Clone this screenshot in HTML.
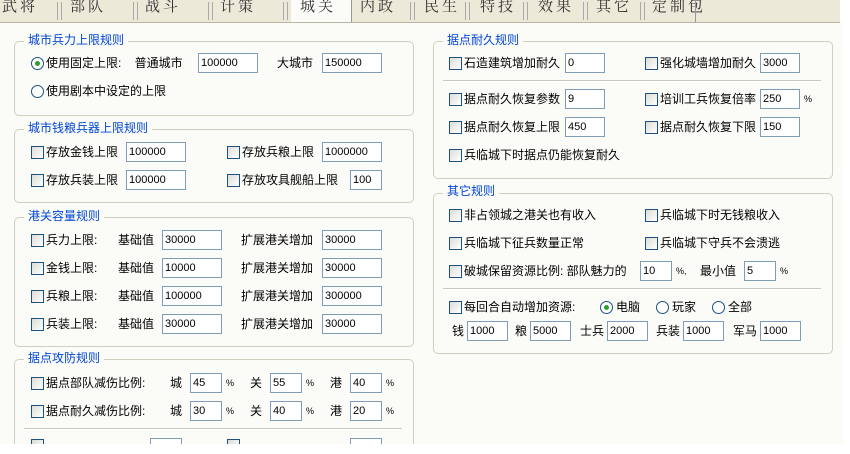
<!DOCTYPE html><html><head><meta charset="utf-8"><style>
html,body{margin:0;width:850px;height:454px;overflow:hidden}
body{background:#fff;position:relative;font-family:"Liberation Sans","Noto Sans CJK SC","WenQuanYi Zen Hei",sans-serif;font-size:12px;color:#000}
.bg{position:absolute;left:0;top:22px;width:843px;height:432px;background:#fbfbf8}
.tabs{position:absolute;left:0;top:0;width:840px;height:22px;background:#ece9d8;border-bottom:1px solid #b8b4a0;overflow:hidden}
.tab{position:absolute;top:-5px;font-size:15px;letter-spacing:3px;color:#333;font-family:"Noto Serif CJK SC",serif}
.sep{position:absolute;top:2px;width:3px;height:18px;border-left:1px solid #aaa;border-right:1px solid #aaa}
.g{position:absolute;border:1px solid #d0d0bf;border-radius:5px}
.gt{position:absolute;color:#0046d5;background:#fbfbf8;padding:0 4px;line-height:14px}
.t{position:absolute;line-height:14px;white-space:nowrap}
.cb{position:absolute;width:11px;height:11px;border:1px solid #1c5180;background:linear-gradient(135deg,#dcdcd6,#fff)}
.rb{position:absolute;width:11px;height:11px;border:1px solid #1c5180;border-radius:50%;background:#fff}
.rb.on:after{content:"";position:absolute;left:3px;top:3px;width:5px;height:5px;border-radius:50%;background:#2aa02a}
.in{position:absolute;border:1px solid #7f9db9;background:#fff;font-size:11px;line-height:18px;padding-left:2px;box-sizing:border-box;height:20px}
.hr{position:absolute;height:1px;background:#c8c8bc;border-bottom:1px solid #fff}
</style></head><body>
<div class="bg"></div>
<div class="tabs">
<span class="tab" style="left:2px">武将</span><div class="sep" style="left:57px"></div>
<span class="tab" style="left:70px">部队</span><div class="sep" style="left:133px"></div>
<span class="tab" style="left:145px">战斗</span><div class="sep" style="left:208px"></div>
<span class="tab" style="left:220px">计策</span><div class="sep" style="left:283px"></div>
<div style="position:absolute;left:291px;top:0;width:60px;height:23px;background:#fbfbf8;border-right:1px solid #999"></div>
<span class="tab" style="left:300px">城关</span>
<span class="tab" style="left:360px">内政</span><div class="sep" style="left:410px"></div>
<span class="tab" style="left:424px">民生</span><div class="sep" style="left:465px"></div>
<span class="tab" style="left:480px">特技</span><div class="sep" style="left:523px"></div>
<span class="tab" style="left:538px">效果</span><div class="sep" style="left:583px"></div>
<span class="tab" style="left:596px">其它</span><div class="sep" style="left:640px"></div>
<span class="tab" style="left:652px">定制包</span><div style="position:absolute;left:695px;top:0;width:1px;height:22px;background:#999"></div>
</div>

<div class="g" style="left:14px;top:41px;width:398px;height:73px"></div><div class="gt" style="left:24px;top:33px">城市兵力上限规则</div>
<div class="rb on" style="left:31px;top:57px"></div><div class="t" style="left:46px;top:56px">使用固定上限:&nbsp;&nbsp;&nbsp;&nbsp;普通城市</div>
<div class="in" style="left:198px;top:53px;width:60px">100000</div>
<div class="t" style="left:277px;top:56px">大城市</div><div class="in" style="left:322px;top:53px;width:60px">150000</div>
<div class="rb" style="left:31px;top:85px"></div><div class="t" style="left:46px;top:84px">使用剧本中设定的上限</div>

<div class="g" style="left:14px;top:129px;width:398px;height:72px"></div><div class="gt" style="left:24px;top:121px">城市钱粮兵器上限规则</div>
<div class="cb" style="left:31px;top:146px"></div><div class="t" style="left:46px;top:145px">存放金钱上限</div><div class="in" style="left:126px;top:142px;width:60px">100000</div>
<div class="cb" style="left:227px;top:146px"></div><div class="t" style="left:242px;top:145px">存放兵粮上限</div><div class="in" style="left:322px;top:142px;width:60px">1000000</div>
<div class="cb" style="left:31px;top:174px"></div><div class="t" style="left:46px;top:173px">存放兵装上限</div><div class="in" style="left:126px;top:170px;width:60px">100000</div>
<div class="cb" style="left:227px;top:174px"></div><div class="t" style="left:242px;top:173px">存放攻具舰船上限</div><div class="in" style="left:350px;top:170px;width:32px">100</div>

<div class="g" style="left:14px;top:217px;width:398px;height:128px"></div><div class="gt" style="left:24px;top:209px">港关容量规则</div>
<div class="cb" style="left:31px;top:234px"></div><div class="t" style="left:46px;top:233px">兵力上限:</div><div class="t" style="left:118px;top:233px">基础值</div><div class="in" style="left:162px;top:230px;width:60px">30000</div><div class="t" style="left:241px;top:233px">扩展港关增加</div><div class="in" style="left:322px;top:230px;width:60px">30000</div>
<div class="cb" style="left:31px;top:262px"></div><div class="t" style="left:46px;top:261px">金钱上限:</div><div class="t" style="left:118px;top:261px">基础值</div><div class="in" style="left:162px;top:258px;width:60px">10000</div><div class="t" style="left:241px;top:261px">扩展港关增加</div><div class="in" style="left:322px;top:258px;width:60px">30000</div>
<div class="cb" style="left:31px;top:290px"></div><div class="t" style="left:46px;top:289px">兵粮上限:</div><div class="t" style="left:118px;top:289px">基础值</div><div class="in" style="left:162px;top:286px;width:60px">100000</div><div class="t" style="left:241px;top:289px">扩展港关增加</div><div class="in" style="left:322px;top:286px;width:60px">300000</div>
<div class="cb" style="left:31px;top:318px"></div><div class="t" style="left:46px;top:317px">兵装上限:</div><div class="t" style="left:118px;top:317px">基础值</div><div class="in" style="left:162px;top:314px;width:60px">30000</div><div class="t" style="left:241px;top:317px">扩展港关增加</div><div class="in" style="left:322px;top:314px;width:60px">30000</div>

<div class="g" style="left:14px;top:359px;width:398px;height:92px;border-bottom:none;border-radius:5px 5px 0 0"></div><div class="gt" style="left:24px;top:351px">据点攻防规则</div>
<div class="cb" style="left:31px;top:377px"></div><div class="t" style="left:46px;top:376px">据点部队减伤比例:</div><div class="t" style="left:170px;top:376px">城</div><div class="in" style="left:190px;top:373px;width:32px">45</div><div class="t" style="left:226px;top:376px;font-size:9px">%</div><div class="t" style="left:250px;top:376px">关</div><div class="in" style="left:270px;top:373px;width:32px">55</div><div class="t" style="left:306px;top:376px;font-size:9px">%</div><div class="t" style="left:330px;top:376px">港</div><div class="in" style="left:350px;top:373px;width:32px">40</div><div class="t" style="left:386px;top:376px;font-size:9px">%</div>
<div class="cb" style="left:31px;top:405px"></div><div class="t" style="left:46px;top:404px">据点耐久减伤比例:</div><div class="t" style="left:170px;top:404px">城</div><div class="in" style="left:190px;top:401px;width:32px">30</div><div class="t" style="left:226px;top:404px;font-size:9px">%</div><div class="t" style="left:250px;top:404px">关</div><div class="in" style="left:270px;top:401px;width:32px">40</div><div class="t" style="left:306px;top:404px;font-size:9px">%</div><div class="t" style="left:330px;top:404px">港</div><div class="in" style="left:350px;top:401px;width:32px">20</div><div class="t" style="left:386px;top:404px;font-size:9px">%</div>
<div class="hr" style="left:24px;top:428px;width:378px"></div>
<div class="cb" style="left:31px;top:439px"></div><div class="in" style="left:150px;top:438px;width:32px"></div><div class="cb" style="left:227px;top:439px"></div><div class="in" style="left:350px;top:438px;width:32px"></div>
<div style="position:absolute;left:0;top:444px;width:850px;height:10px;background:#fff"></div>

<div class="g" style="left:433px;top:41px;width:398px;height:136px"></div><div class="gt" style="left:443px;top:33px">据点耐久规则</div>
<div class="cb" style="left:449px;top:57px"></div><div class="t" style="left:464px;top:56px">石造建筑增加耐久</div><div class="in" style="left:565px;top:53px;width:40px">0</div>
<div class="cb" style="left:645px;top:57px"></div><div class="t" style="left:660px;top:56px">强化城墙增加耐久</div><div class="in" style="left:760px;top:53px;width:40px">3000</div>
<div class="hr" style="left:443px;top:80px;width:378px"></div>
<div class="cb" style="left:449px;top:93px"></div><div class="t" style="left:464px;top:92px">据点耐久恢复参数</div><div class="in" style="left:565px;top:89px;width:40px">9</div>
<div class="cb" style="left:645px;top:93px"></div><div class="t" style="left:660px;top:92px">培训工兵恢复倍率</div><div class="in" style="left:760px;top:89px;width:40px">250</div><div class="t" style="left:804px;top:92px;font-size:9px">%</div>
<div class="cb" style="left:449px;top:121px"></div><div class="t" style="left:464px;top:120px">据点耐久恢复上限</div><div class="in" style="left:565px;top:117px;width:40px">450</div>
<div class="cb" style="left:645px;top:121px"></div><div class="t" style="left:660px;top:120px">据点耐久恢复下限</div><div class="in" style="left:760px;top:117px;width:40px">150</div>
<div class="cb" style="left:449px;top:149px"></div><div class="t" style="left:464px;top:148px">兵临城下时据点仍能恢复耐久</div>

<div class="g" style="left:433px;top:193px;width:398px;height:159px"></div><div class="gt" style="left:443px;top:184px">其它规则</div>
<div class="cb" style="left:449px;top:209px"></div><div class="t" style="left:464px;top:208px">非占领城之港关也有收入</div>
<div class="cb" style="left:645px;top:209px"></div><div class="t" style="left:660px;top:208px">兵临城下时无钱粮收入</div>
<div class="cb" style="left:449px;top:237px"></div><div class="t" style="left:464px;top:236px">兵临城下征兵数量正常</div>
<div class="cb" style="left:645px;top:237px"></div><div class="t" style="left:660px;top:236px">兵临城下守兵不会溃逃</div>
<div class="cb" style="left:449px;top:265px"></div><div class="t" style="left:464px;top:264px">破城保留资源比例:&nbsp;部队魅力的</div><div class="in" style="left:640px;top:261px;width:32px">10</div><div class="t" style="left:676px;top:264px;font-size:9px">%,</div><div class="t" style="left:700px;top:264px">最小值</div><div class="in" style="left:744px;top:261px;width:32px">5</div><div class="t" style="left:780px;top:264px;font-size:9px">%</div>
<div class="hr" style="left:443px;top:288px;width:378px"></div>
<div class="cb" style="left:449px;top:301px"></div><div class="t" style="left:464px;top:300px">每回合自动增加资源:</div>
<div class="rb on" style="left:600px;top:301px"></div><div class="t" style="left:616px;top:300px">电脑</div>
<div class="rb" style="left:656px;top:301px"></div><div class="t" style="left:672px;top:300px">玩家</div>
<div class="rb" style="left:712px;top:301px"></div><div class="t" style="left:728px;top:300px">全部</div>
<div class="t" style="left:452px;top:324px">钱</div><div class="in" style="left:467px;top:321px;width:41px">1000</div>
<div class="t" style="left:515px;top:324px">粮</div><div class="in" style="left:530px;top:321px;width:41px">5000</div>
<div class="t" style="left:580px;top:324px">士兵</div><div class="in" style="left:607px;top:321px;width:41px">2000</div>
<div class="t" style="left:656px;top:324px">兵装</div><div class="in" style="left:683px;top:321px;width:41px">1000</div>
<div class="t" style="left:733px;top:324px">军马</div><div class="in" style="left:760px;top:321px;width:41px">1000</div>
</body></html>
